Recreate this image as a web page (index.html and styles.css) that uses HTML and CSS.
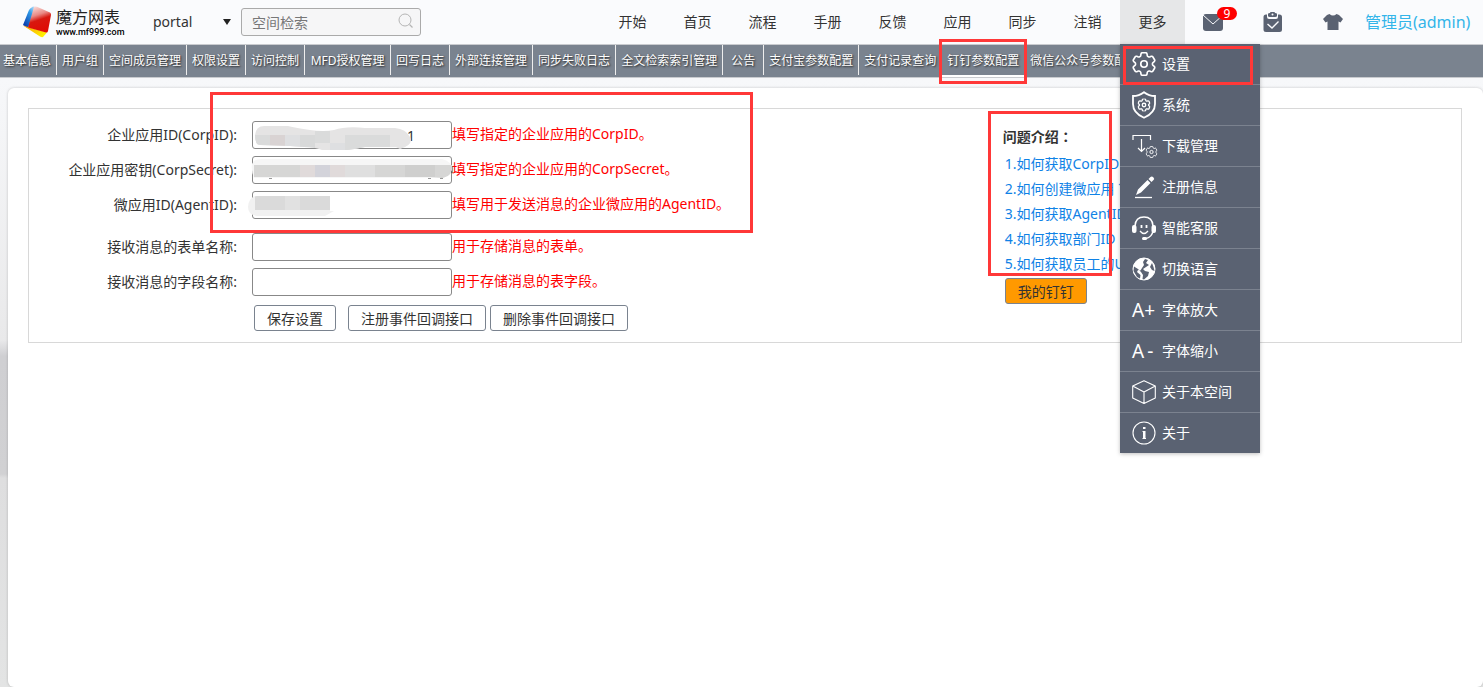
FILE: index.html
```html
<!DOCTYPE html>
<html lang="zh-CN">
<head>
<meta charset="utf-8">
<title>魔方网表</title>
<link rel="stylesheet" href="styles.css">
</head>
<body>
<svg class="defs" aria-hidden="true">
  <symbol id="gear" viewBox="2.4 2.4 19.2 19.2">
    <path fill="none" stroke="currentColor" d="M9.594 3.94c.09-.542.56-.94 1.11-.94h2.593c.55 0 1.02.398 1.11.94l.213 1.281c.063.374.313.686.645.87.074.04.147.083.22.127.325.196.72.257 1.075.124l1.217-.456a1.125 1.125 0 0 1 1.37.49l1.296 2.247a1.125 1.125 0 0 1-.26 1.431l-1.003.827c-.293.241-.438.613-.43.992a7.723 7.723 0 0 1 0 .255c-.008.378.137.75.43.991l1.004.827c.424.35.534.955.26 1.43l-1.298 2.247a1.125 1.125 0 0 1-1.369.491l-1.217-.456c-.355-.133-.75-.072-1.076.124a6.47 6.47 0 0 1-.22.128c-.331.183-.581.495-.644.869l-.213 1.281c-.09.543-.56.94-1.11.94h-2.594c-.55 0-1.019-.398-1.11-.94l-.213-1.281c-.062-.374-.312-.686-.644-.87a6.52 6.52 0 0 1-.22-.127c-.325-.196-.72-.257-1.076-.124l-1.217.456a1.125 1.125 0 0 1-1.369-.49l-1.297-2.247a1.125 1.125 0 0 1 .26-1.431l1.004-.827c.292-.24.437-.613.43-.991a6.932 6.932 0 0 1 0-.255c.007-.38-.138-.751-.43-.992l-1.004-.827a1.125 1.125 0 0 1-.26-1.43l1.297-2.247a1.125 1.125 0 0 1 1.37-.491l1.216.456c.356.133.751.072 1.076-.124.072-.044.146-.086.22-.128.332-.183.582-.495.644-.869l.214-1.28Z"/>
    <circle cx="12" cy="12" r="2.6" fill="none" stroke="currentColor"/>
  </symbol>
</svg>

<header class="topbar">
  <a class="logo" href="#">
    <svg class="logo-mark" viewBox="0 0 30 32" aria-hidden="true">
      <defs>
        <linearGradient id="lr" x1="0.2" y1="0" x2="0.5" y2="1"><stop offset="0" stop-color="#fbe3e0"/><stop offset="0.35" stop-color="#e98a85"/><stop offset="0.55" stop-color="#d8180f"/><stop offset="1" stop-color="#e00a04"/></linearGradient>
        <linearGradient id="lb" x1="1" y1="0" x2="0.3" y2="1"><stop offset="0" stop-color="#d5eefc"/><stop offset="0.4" stop-color="#2f9be8"/><stop offset="1" stop-color="#0b3fae"/></linearGradient>
        <linearGradient id="ly" x1="0" y1="0" x2="1" y2="0.6"><stop offset="0" stop-color="#f79a07"/><stop offset="1" stop-color="#fff000"/></linearGradient>
      </defs>
      <path fill="url(#lb)" d="M11 .5Q8 2 7 4L1 19 6 22 14 1Z"/>
      <path fill="url(#ly)" d="M1 19.500 6 21 25 26.500 21 31Q20 31.500 18 30.500Z"/>
      <path fill="url(#lr)" d="M12 1Q13 0 15 .8L28 6.500Q29.500 7.500 29 9L26 25Q25.500 27 24 26.500L6 21.500Z"/>
    </svg>
    <span class="logo-text"><b class="logo-name">魔方网表</b><small class="logo-url">www.mf999.com</small></span>
  </a>
  <select class="space-select" aria-label="空间"><option>portal</option></select>
  <label class="search">
    <input class="search-input" type="text" placeholder="空间检索" aria-label="空间检索">
    <svg class="search-icon" viewBox="0 0 16 16" aria-hidden="true"><circle cx="7" cy="7" r="6" fill="none" stroke="#b5b5b5"/><path d="m11.5 11.5 3 3" stroke="#b5b5b5" stroke-width="1.3"/></svg>
  </label>
  <nav class="mainnav">
    <a class="nav-item" href="#">开始</a>
    <a class="nav-item" href="#">首页</a>
    <a class="nav-item" href="#">流程</a>
    <a class="nav-item" href="#">手册</a>
    <a class="nav-item" href="#">反馈</a>
    <a class="nav-item" href="#">应用</a>
    <a class="nav-item" href="#">同步</a>
    <a class="nav-item" href="#">注销</a>
    <div class="more">
      <a class="nav-item nav-item-open" href="#">更多</a>
      <div class="menu">
        <a class="menu-item" href="#"><svg class="menu-icon" viewBox="0 0 24 24"><use href="#gear" width="24" height="24" stroke-width="1.3"/></svg>设置<span class="mark mark-menu"></span></a>
        <a class="menu-item" href="#"><svg class="menu-icon menu-icon-tall" viewBox="0 0 24 28"><path d="M12 1.2Q17 5 23 5V13Q23 22 12 26.8 1 22 1 13V5Q7 5 12 1.2Z" fill="none" stroke="#fff" stroke-width="1.8"/><use href="#gear" x="5.5" y="7.5" width="13" height="13" stroke-width="1.9"/></svg>系统</a>
        <a class="menu-item" href="#"><svg class="menu-icon" viewBox="0 0 24 24"><path d="M1 6V1.500H18.500V6M9.500 5V17.500M6 14 9.500 17.500 13 14" fill="none" stroke="#fff" stroke-width="1.2"/><use href="#gear" x="13.500" y="12" width="12" height="12" stroke-width="1.5"/></svg>下载管理</a>
        <a class="menu-item" href="#"><svg class="menu-icon" viewBox="0 0 24 24"><path d="M4 20 6 14.500 15.500 5 18.500 8 9 17.500ZM16.500 4 18.500 2Q20 1 21.500 2.500T21.500 5L19.500 7Z" fill="#fff"/><path d="M3 22.500H20" stroke="#fff" stroke-width="1.3"/></svg>注册信息</a>
        <a class="menu-item" href="#"><svg class="menu-icon" viewBox="0 0 24 24"><path d="M3 10Q3.500 1 12 1T21 10M21 15Q20 21 14 22.500" fill="none" stroke="#fff" stroke-width="1.500"/><rect y="9" width="4.500" height="8" rx="2" fill="#fff"/><rect x="19.500" y="9" width="4.500" height="8" rx="2" fill="#fff"/><rect x="10" y="21" width="5" height="3" rx="1.500" fill="#fff"/><path d="M9.500 9V12M14.500 9V12" stroke="#fff" stroke-width="1.800"/><path d="M8 15Q12 20 16 15" fill="none" stroke="#fff" stroke-width="1.300"/></svg>智能客服</a>
        <a class="menu-item" href="#"><svg class="menu-icon" viewBox="0 0 24 24"><circle cx="12" cy="12" r="11" fill="#fff" stroke="#fff"/><path fill="#5a6272" d="M13 2 16 3 14 6 17 8 14 10 11 12 13 14 17 15 16 19 12 22.500 10.500 22 11 18 9 15 6 12 2 9.500 1.500 14 5 20 8 21.500 8.500 18 5 15 6 13 8.500 13.500 10 11 12 8 11 5Z"/><path fill="#5a6272" d="M20 6 21.500 10 22.500 14 20 13 18 10Z"/></svg>切换语言</a>
        <a class="menu-item" href="#"><span class="menu-icon menu-glyph" aria-hidden="true">A+</span>字体放大</a>
        <a class="menu-item" href="#"><span class="menu-icon menu-glyph" aria-hidden="true">A&#8201;-</span>字体缩小</a>
        <a class="menu-item" href="#"><svg class="menu-icon" viewBox="0 0 24 24"><path d="M12 .7 23.300 6V18L12 23.500.7 18V6ZM.7 6 12 12 23.300 6M12 12V23.500" fill="none" stroke="#fff" stroke-width="1.100" stroke-linejoin="round"/></svg>关于本空间</a>
        <a class="menu-item" href="#"><svg class="menu-icon" viewBox="0 0 24 24"><circle cx="12" cy="12" r="11" fill="none" stroke="#fff" stroke-width="1.100"/><path d="M11 6H13.500V8H11ZM10.500 10H13.500V17H14V18H10.500V17H11V11H10.500Z" fill="#fff"/></svg>关于</a>
      </div>
    </div>
  </nav>
  <div class="tools">
    <button class="tool" type="button" aria-label="消息"><svg class="tool-icon" viewBox="0 0 20 20"><rect y="2" width="20" height="17" rx="3" fill="#5a6272"/><path d="m0 3 10 9L20 3" fill="none" stroke="#fafbfd"/></svg><span class="badge">9</span></button>
    <button class="tool" type="button" aria-label="任务"><svg class="tool-icon" viewBox="0 0 20 20"><path fill="#5a6272" d="M3 2.500H4V5Q4 7 6 7H13Q15 7 15 5V2.500H16.500Q19 2.500 19 5V17.500Q19 20 16.500 20H3Q.5 20 .5 17.500V5Q.5 2.500 3 2.500ZM5 2Q5 1 7 1 7 0 8 0H11Q12 0 12 1 14 1 14 2V4Q14 5 12 5H7Q5 5 5 4Z"/><circle cx="9.500" cy="2.500" r="1" fill="#fafbfd"/><path d="m4.500 12 4.500 4 6.500-6.500" fill="none" stroke="#fafbfd" stroke-width="1.400"/></svg></button>
    <button class="tool" type="button" aria-label="皮肤"><svg class="tool-icon" viewBox="0 0 20 20"><path fill="#5a6272" d="M6.500 2Q10 5 13.500 2L16 3 20 7 17.500 10.500 15.500 9.500V18H4.500V9.500L2.500 10.500 0 7 4 3Z"/></svg></button>
  </div>
  <a class="user" href="#">管理员(admin)</a>
</header>

<nav class="tabs">
  <a class="tab" href="#">基本信息</a>
  <a class="tab" href="#">用户组</a>
  <a class="tab" href="#">空间成员管理</a>
  <a class="tab" href="#">权限设置</a>
  <a class="tab" href="#">访问控制</a>
  <a class="tab tab-mfd" href="#">MFD授权管理</a>
  <a class="tab" href="#">回写日志</a>
  <a class="tab" href="#">外部连接管理</a>
  <a class="tab" href="#">同步失败日志</a>
  <a class="tab" href="#">全文检索索引管理</a>
  <a class="tab" href="#">公告</a>
  <a class="tab" href="#">支付宝参数配置</a>
  <a class="tab" href="#">支付记录查询</a>
  <a class="tab tab-active" href="#">钉钉参数配置<span class="mark mark-tab"></span></a>
  <a class="tab" href="#">微信公众号参数配置</a>
</nav>

<main class="panel">
  <section class="box">
    <form class="form">
      <div class="row">
        <label class="label" for="corpid">企业应用ID(CorpID):</label>
        <span class="field"><input class="input input-masked" id="corpid" type="text" value="1">
          <svg class="mosaic" viewBox="0 0 206 30" aria-hidden="true"><clipPath id="m1"><path d="M5 14Q6 4 16 5L38 5Q46 7 60 9T84 9Q96 5 115 7H145Q156 8 160 16T150 28L146 26H115Q105 28 98 29H72Q65 26 54 26L40 25 10 24Q5 24 5 14Z"/></clipPath><g clip-path="url(#m1)"><path fill="#e5e4e4" d="M0 0H170V30H0Z"/><path fill="#dadbdb" d="M5 14H20V30H5ZM65 10H80V22H65ZM95 14H140V30H95Z"/><path fill="#d9d3d3" d="M20 14H35V30H20Z"/><path fill="#dedfe1" d="M35 14H50V30H35ZM80 22H95V30H80Z"/><path fill="#d8d9d9" d="M50 14H65V30H50Z"/></g></svg></span>
        <span class="hint">填写指定的企业应用的CorpID。</span>
      </div>
      <div class="row">
        <label class="label" for="secret">企业应用密钥(CorpSecret):</label>
        <span class="field"><input class="input" id="secret" type="text">
          <svg class="mosaic" viewBox="0 0 206 30" aria-hidden="true"><path d="M19 22h3M178 22h3M190 22h3M202 10v7" stroke="#333"/><path fill="#f6f6f6" d="M2 8Q4 3 12 3H192Q202 5 202 14L190 22H4Q1 15 2 8Z"/><path fill="#d6d6d5" d="M4 9H202Q203 20 193 22L180 21H4Z"/><path fill="#e0dada" d="M50 9H65V21H50ZM80 9H95V21H80Z"/><path fill="#d3d3da" d="M65 9H80V21H65Z"/><path fill="#dfdfdf" d="M95 9H125V21H95Z"/><path fill="#cfcfce" d="M155 9H185V21H155Z"/></svg></span>
        <span class="hint">填写指定的企业应用的CorpSecret。</span>
      </div>
      <div class="row row-last-of-group">
        <label class="label" for="agentid">微应用ID(AgentID):</label>
        <span class="field"><input class="input" id="agentid" type="text">
          <svg class="mosaic" viewBox="0 0 206 30" aria-hidden="true"><path fill="#f1f1f1" d="M5 5Q-2 8-2 16T7 25H75L84 20H80V5Z"/><path fill="#dadada" d="M5 6Q5 5 7 5H80V19H5Z"/><path fill="#e1e1e1" d="M35 5H50V19H35Z"/></svg></span>
        <span class="hint">填写用于发送消息的企业微应用的AgentID。</span>
      </div>
      <div class="row">
        <label class="label" for="formname">接收消息的表单名称:</label>
        <span class="field"><input class="input" id="formname" type="text"></span>
        <span class="hint">用于存储消息的表单。</span>
      </div>
      <div class="row">
        <label class="label" for="fieldname">接收消息的字段名称:</label>
        <span class="field"><input class="input" id="fieldname" type="text"></span>
        <span class="hint">用于存储消息的表字段。</span>
      </div>
      <div class="actions">
        <button class="btn btn-save" type="button">保存设置</button>
        <button class="btn" type="button">注册事件回调接口</button>
        <button class="btn" type="button">删除事件回调接口</button>
      </div>
      <span class="mark mark-form"></span>
    </form>
    <aside class="help">
      <h2 class="help-title">问题介绍<span class="colon" lang="zh-TW">：</span></h2>
      <ol class="help-list">
        <li><a class="help-link" href="#">1.如何获取CorpID</a></li>
        <li><a class="help-link" href="#">2.如何创建微应用 ？</a></li>
        <li><a class="help-link" href="#">3.如何获取AgentID</a></li>
        <li><a class="help-link" href="#">4.如何获取部门ID</a></li>
        <li><a class="help-link" href="#">5.如何获取员工的UserID</a></li>
      </ol>
      <button class="btn btn-orange" type="button">我的钉钉</button>
      <span class="mark mark-help"></span>
    </aside>
  </section>
</main>
</body>
</html>
```
FILE: styles.css
```css
* { box-sizing: border-box; }

body {
  margin: 0;
  min-height: 100vh;
  display: flex;
  flex-direction: column;
  font: 14px/20px "Noto Sans", "Noto Sans CJK SC", sans-serif;
  color: #333;
  background: linear-gradient(#fbfcfe 0, #f6f7f9 100px, #e9e9ea 340px, #cfcfd2 356px, #d1d1d3 474px, #dededf 478px, #e3e4e4 100%);
}

a { color: inherit; text-decoration: none; }
input, button, select { font: inherit; color: inherit; }
.defs { position: absolute; width: 0; height: 0; }

/* top bar */
.topbar { display: flex; align-items: center; height: 44px; padding: 0 11px 0 22px; background: #fafbfd; }
.logo { display: flex; align-items: center; gap: 4px; width: 98px; }
.logo-mark { width: 30px; height: 32px; flex: none; }
.logo-text { display: flex; flex-direction: column; color: #222; white-space: nowrap; }
.logo-name { font-size: 16px; line-height: 20px; font-weight: 400; }
.logo-url { font: 500 9px/11px Roboto, "Liberation Sans", sans-serif; color: #000; }

.space-select {
  width: 79px;
  height: 28px;
  margin-left: 32px;
  padding: 0 0 0 1px;
  border: 0;
  appearance: none;
  background: url("data:image/svg+xml,%3Csvg xmlns='http://www.w3.org/2000/svg' width='8' height='6'%3E%3Cpath fill='%23222' d='M0 0h8L4 6z'/%3E%3C/svg%3E") no-repeat right center;
}
.search { position: relative; width: 180px; margin-left: 10px; }
.search-input {
  display: block;
  width: 100%;
  height: 28px;
  padding: 0 32px 0 10px;
  border: 1px solid #aaa;
  border-radius: 3px;
  background: #f6f6f7;
}
.search-input::placeholder { color: #777; opacity: 1; }
.search-icon { position: absolute; right: 7px; top: 5px; width: 16px; height: 16px; }

.mainnav { display: flex; margin-left: auto; height: 44px; }
.nav-item { display: block; width: 65px; line-height: 44px; text-align: center; }
.nav-item-open { background: #e6e7e8; }
.more { position: relative; z-index: 5; }

.menu {
  position: absolute;
  top: 100%;
  left: 0;
  width: 140px;
  background: #5a6272;
  color: #fff;
  box-shadow: 0 1px 4px rgba(0, 0, 0, 0.25);
}
.menu-item { position: relative; display: flex; align-items: center; gap: 6px; height: 41px; padding-left: 12px; border-bottom: 1px solid #7b828f; white-space: nowrap; }
.menu-item:last-child { height: 40px; border-bottom: 0; }
.menu-icon { width: 24px; height: 24px; flex: none; overflow: visible; }
.menu-icon-tall { height: 28px; }
.menu-glyph { font: 19px/24px "Noto Sans", sans-serif; }

.tools { display: flex; width: 180px; }
.tool { position: relative; width: 60px; height: 28px; padding: 0 4px 0 0; border: 0; background: none; display: flex; align-items: center; justify-content: center; }
.tool-icon { width: 20px; height: 20px; }
.badge { position: absolute; left: 32px; top: -1px; width: 20px; height: 13px; border-radius: 7px; background: #f00; color: #fff; font: 12px/13px "Noto Sans", sans-serif; }
.user { min-width: 107px; font-size: 16px; color: #33b5e9; }

/* secondary tabs */
.tabs {
  display: flex;
  height: 34px;
  border-top: 1px solid #c9cbcf;
  border-bottom: 1px solid #c9cbcf;
  background: #7a838f;
  color: #fff;
  font-size: 12px;
  text-shadow: 1px 1px 2px #222;
}
.tab { position: relative; flex: none; min-width: 41px; height: 30px; padding: 0 5px; border-right: 1px solid #eee; line-height: 31px; text-align: center; white-space: nowrap; }
.tab:first-child { padding-left: 3px; }
.tab-mfd { min-width: 86px; }
.tab-active { height: 32px; border-bottom: 2px solid #fff; line-height: 32px; }

/* content */
.panel { flex: 1; margin: 10px 0 0 8px; padding: 20px 21px 20px 20px; border-radius: 6px; background: #fff; box-shadow: 0 0 3px rgba(0, 0, 0, 0.2); }
.box { display: flex; border: 1px solid #d8d8d8; padding: 12px 0 11px; }
.form { position: relative; width: 68%; flex: none; display: flex; flex-direction: column; gap: 7px; }
.row { display: flex; align-items: center; }
.row-last-of-group { margin-bottom: 7px; }
.label { width: 208px; margin-right: 15px; text-align: right; }
.field { position: relative; }
.input { display: block; width: 200px; height: 28px; padding: 0 8px; border: 1px solid #888; border-radius: 3px; background: #fff; }
.input-masked { padding-left: 154px; }
.mosaic { position: absolute; left: -2px; top: 0; width: 206px; height: 30px; overflow: visible; }
.hint { padding-bottom: 2px; color: #f00; white-space: nowrap; }
.actions { display: flex; gap: 4px; padding: 2px 0 0 225px; }
.btn { height: 26px; padding: 1px 12px 0; border: 1px solid #7a838f; border-radius: 3px; background: #fff; line-height: 24px; white-space: nowrap; }
.btn-save { margin-right: 8px; }

.help { position: relative; padding-top: 6px; white-space: nowrap; }
.help-title { margin: 0 0 4px; font-size: 14px; line-height: 20px; }
.colon { font-family: "Noto Sans CJK TC", sans-serif; line-height: 1; }
.help-list { margin: 0 0 2px; padding: 0 0 0 2px; list-style: none; line-height: 25px; }
.help-link { color: #0f82e6; }
.btn-orange { margin-left: 2px; background: #f90; display: block; }

/* highlight frames */
.mark { position: absolute; border: 3px solid #ff3838; pointer-events: none; }
.mark-menu { left: 3px; top: 2px; width: 130px; height: 39px; }
.mark-tab { left: -3px; top: -6px; width: 88px; height: 45px; }
.mark-form { left: 181px; top: -29px; width: 543px; height: 141px; }
.mark-help { left: -15px; top: -10px; width: 124px; height: 165px; }
```
